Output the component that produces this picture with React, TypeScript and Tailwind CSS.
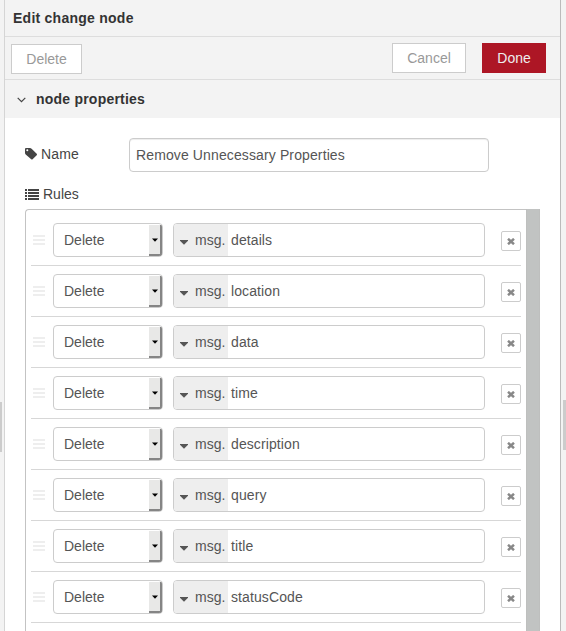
import React from 'react';

const rules = ['details', 'location', 'data', 'time', 'description', 'query', 'title', 'statusCode'];

function TagIcon() {
  return (
    <svg className="h-3 w-3 shrink-0" viewBox="0 0 12 12" fill="#444">
      <path
        fillRule="evenodd"
        d="M0 1a1 1 0 0 1 1-1h3.900c.6 0 1.300.3 1.700.7l5.100 5.100c.4.4.4 1 0 1.400l-4.100 4.100c-.4.4-1 .4-1.400 0L.7 6.500C.3 6.100 0 5.400 0 4.900zM2.300 1.300a1 1 0 1 0 0 2 1 1 0 0 0 0-2z"
      />
    </svg>
  );
}

function ListIcon() {
  return (
    <svg className="h-[11px] w-[14px] shrink-0" viewBox="0 0 14 11" fill="#444" shapeRendering="crispEdges">
      {[0, 3, 6, 9].map((y) => (
        <g key={y}>
          <rect x="0" y={y} width="2" height="2" />
          <rect x="3" y={y} width="11" height="2" />
        </g>
      ))}
    </svg>
  );
}

function RuleRow({ name }: { name: string }) {
  return (
    <li className="flex h-[51px] items-start border-b border-[#d7d7d7] pt-2">
      <div className="ml-[2px] mt-[12px] flex w-3 flex-col gap-[2px]">
        <span className="h-[2px] bg-[#eee]" />
        <span className="h-[2px] bg-[#eee]" />
        <span className="h-[2px] bg-[#eee]" />
      </div>
      <div className="ml-2 flex h-[34px] w-[110px] overflow-hidden rounded border border-[#ccc] bg-white">
        <span className="flex-1 pl-[10px] leading-[32px]">Delete</span>
        <span className="mt-px flex h-[31px] w-[13px] items-center justify-center border-b-2 border-r-2 border-[#858585] bg-[#e8e8e7]">
          <svg className="h-[4px] w-[6px]" viewBox="0 0 6 4" fill="#000">
            <path d="M0 .5h6L3 3.800z" />
          </svg>
        </span>
      </div>
      <div className="ml-[10px] flex h-[34px] w-[312px] overflow-hidden rounded border border-[#ccc] bg-white leading-[32px]">
        <span className="flex w-[54px] items-center bg-[#eee] pl-[6px]">
          <svg className="mt-[4px] h-[5px] w-[8px]" viewBox="0 0 8 5" fill="#555">
            <path d="M0 0h8v.8L4 4.700 0 .8z" />
          </svg>
          <span className="ml-[7px]">msg.</span>
        </span>
        <span className="pl-[3px] tracking-[0.1px]">{name}</span>
      </div>
      <button className="ml-4 mt-2 flex h-5 w-5 items-center justify-center rounded-[2px] border border-[#ccc] bg-white">
        <svg className="mt-px h-[7px] w-[8px]" viewBox="0 0 8 7" stroke="#888" strokeWidth="2.500">
          <path d="M1 .8l6 5.400M7 .8L1 6.200" />
        </svg>
      </button>
    </li>
  );
}

export default function App() {
  return (
    <div className="flex h-[631px] w-[566px] overflow-hidden bg-[#f3f3f3] font-['Liberation_Sans',Arial,sans-serif] text-[14px] leading-5 text-[#555]">
      <div className="flex w-[5px] shrink-0 items-start border-r border-[#d5d5d5]">
        <span className="mt-[402px] h-[50px] w-[2px] bg-[#ccc]" />
      </div>
      <main className="flex w-[555px] shrink-0 flex-col bg-white">
        <header className="h-[37px] shrink-0 border-b border-[#ddd] bg-[#f3f3f3] pl-2 font-bold leading-[36px] tracking-[0.25px] text-[#333]">
          Edit change node
        </header>
        <div className="flex h-[43px] shrink-0 items-start border-b border-[#ddd] bg-[#f3f3f3] pl-[6px] pt-[6px] text-[#999]">
          <button className="mt-px h-[30px] w-[71px] border border-[#ccc] bg-white">Delete</button>
          <button className="ml-[310px] h-[30px] w-[74px] border border-[#ccc] bg-white">Cancel</button>
          <button className="ml-4 h-[30px] w-16 bg-[#ad1625] text-[#eee]">Done</button>
        </div>
        <div className="flex h-[38px] shrink-0 items-center bg-[#f3f3f3] pl-3 font-bold text-[#333]">
          <svg className="mt-px h-[6px] w-[9px]" viewBox="0 0 9 6" fill="none" stroke="#444" strokeWidth="1.200">
            <path d="M.7.800l3.800 3.800L8.300.8" />
          </svg>
          <span className="ml-[10px] tracking-[0.22px]">node properties</span>
        </div>
        <div className="flex flex-col pl-5 pt-5">
          <div className="flex h-[34px] items-center">
            <label className="flex w-[104px] items-center gap-1 pb-[2px] text-[#444]">
              <TagIcon />
              <span className="tracking-[0.15px]">Name</span>
            </label>
            <div className="h-[34px] w-[360px] rounded border border-[#ccc] pl-[6px] leading-[32px] tracking-[0.12px] shadow-[inset_0_1px_1px_rgba(0,0,0,0.075)]">
              Remove Unnecessary Properties
            </div>
          </div>
          <div className="mt-3 flex h-5 items-center gap-1 text-[#444]">
            <ListIcon />
            <span>Rules</span>
          </div>
          <div className="mt-[5px] flex h-[440px] w-[515px] rounded-tl border-l border-t border-[#c3c3c3]">
            <ul className="ml-[5px] mt-[5px] w-[490px]">
              {rules.map((name) => (
                <RuleRow key={name} name={name} />
              ))}
            </ul>
            <div className="-mt-px ml-[5px] w-[14px] border-x border-[#bebfbe] bg-[#c1c3c2]" />
          </div>
        </div>
      </main>
      <div className="flex w-[6px] shrink-0 items-start justify-end border-l border-[#bbb]">
        <span className="mt-[400px] h-[50px] w-[3px] bg-[#ccc]" />
      </div>
    </div>
  );
}
